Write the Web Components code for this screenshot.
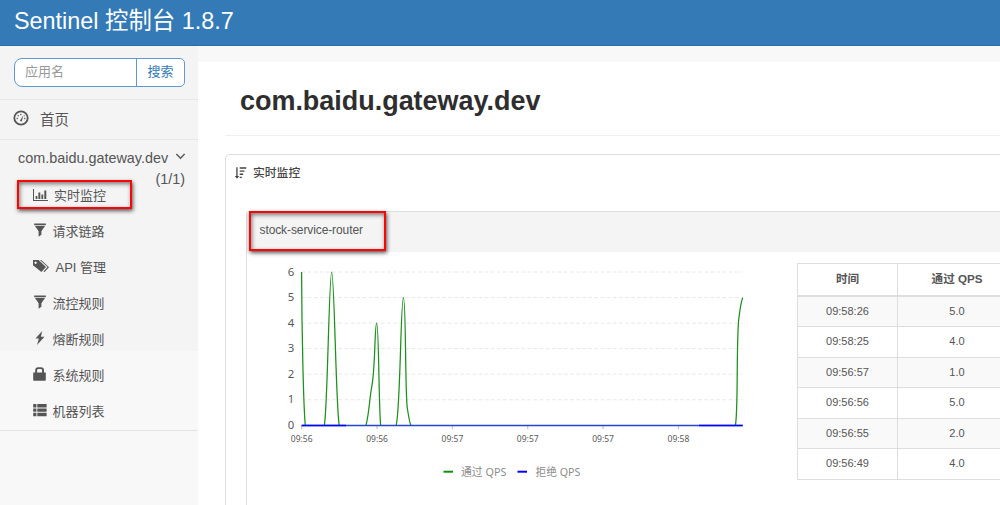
<!DOCTYPE html>
<html lang="zh">
<head>
<meta charset="utf-8">
<title>Sentinel 控制台</title>
<style>
html,body{margin:0;height:100%;overflow:hidden;background:#fff}
body{font-family:"Liberation Sans","Noto Sans CJK SC",sans-serif;color:#555}
</style>
</head>
<body>
<sentinel-app></sentinel-app>
<script>
const define = (name, html) => customElements.define(name, class extends HTMLElement {
  connectedCallback() {
    if (this.shadowRoot) return;
    const root = this.attachShadow({mode: 'open'});
    const t = document.createElement('template');
    t.innerHTML = typeof html === 'function' ? html(this) : html;
    root.append(t.content.cloneNode(true));
  }
});

const ICONS = {
  dash: '<circle cx="8" cy="8" r="6.7" fill="none" stroke="currentColor" stroke-width="1.8"/><path d="M7.1 10.6 10.2 5.4 9 10.8a1 1 0 0 1-1.9-.2z"/><circle cx="4.2" cy="8.4" r=".75"/><circle cx="5.2" cy="5.7" r=".75"/><circle cx="7.8" cy="4.4" r=".75"/><circle cx="11.8" cy="8.4" r=".75"/><circle cx="11.2" cy="5.8" r=".6"/>',
  chart: '<path d="M1 3h1v11h14v1H1zM3.6 10h1.8v3H3.6zM6.4 6.5h1.9V13H6.4zM9.4 8.5h1.8V13H9.4zM12.3 4.5h2V13h-2z"/>',
  filter: '<path d="M2.2 1.5h11.6v1.7H2.2zM3 4h10L9.4 9.2v3.6L6.6 14.8V9.2z"/>',
  tags: '<path fill-rule="evenodd" d="M1 2h5.6L14 9l-4.6 5L1 7.2zM3.6 3.5a1.2 1.2 0 1 0 .01 0z"/><path d="M8 2h1.3L17 9.2l-4.7 5-.8-.7L15.5 9z"/>',
  flash: '<path d="M10.2 1 3.5 8.4h3.4L5 15l7.5-8.3H8.9z"/>',
  lock: '<path fill-rule="evenodd" d="M1.2 6.5h2V4.2a3 3 0 0 1 3-3h2.8a3 3 0 0 1 3 3v2.3h1.8V14a.8.8 0 0 1-.8.8H2a.8.8 0 0 1-.8-.8zM5.1 6.5h5V4.4a1.3 1.3 0 0 0-1.3-1.3H6.4a1.3 1.3 0 0 0-1.3 1.3z"/>',
  list: '<path d="M1.2 2h3.2v3.4H1.2zM1.2 6.4h3.2v3.4H1.2zM1.2 10.8h3.2v3.4H1.2zM5.3 2h9.3v3.4H5.3zM5.3 6.4h9.3v3.4H5.3zM5.3 10.8h9.3v3.4H5.3z"/>',
  sort: '<path d="M2.6 1.5h1.5v10h1.8l-2.5 3.2L.9 11.5h1.7zM6.5 1.5h7.5v1.6H6.5zM6.5 5H12v1.6H6.5zM6.5 8.6h4v1.6h-4zM6.5 12.2h2.4v1.6H6.5z"/>',
  down: '<path d="M2 4.5 8 10.5l6-6" fill="none" stroke="currentColor" stroke-width="2"/>'
};

define('ui-icon', el => `<style>
:host{display:block;flex:none;width:16px;height:16px}
svg{display:block;width:100%;height:100%;fill:currentColor;overflow:visible}
</style><svg viewBox="0 0 16 16">${ICONS[el.getAttribute('name')]}</svg>`);

define('top-bar', `<style>
:host{display:flex;box-sizing:border-box;height:46px;background:#337ab7;border-bottom:1px solid #2a6ba8;color:#fff;
font-size:23.4px;line-height:42px;padding-left:14px;white-space:pre}
</style><slot></slot>`);

define('search-box', `<style>
:host{display:flex;box-sizing:border-box;width:171px;height:29px;margin:12px 0 0 14px;border:1px solid #5e9ace;border-radius:8px 5px 5px 8px;background:#fff;font-size:13px;line-height:26px}
.field{flex:1;padding-left:10px;color:#999}
.btn{width:47px;text-align:center;border-left:1px solid #5e9ace;color:#337ab7}
</style><div class="field">应用名</div><div class="btn">搜索</div>`);

define('nav-item', el => `<style>
:host{display:flex;align-items:center;height:36px;padding-left:32px;font-size:13px;white-space:pre}
ui-icon{margin-right:${el.getAttribute('gap') || 4.5}px}
</style><ui-icon name="${el.getAttribute('icon')}"></ui-icon><slot></slot>`);

define('side-nav', `<style>
:host{display:flex;flex-direction:column;width:198px;height:459px;flex:none;color:#555;
background:linear-gradient(#f4f4f4 305px,#f8f8f8 305px)}
.search{height:53px;border-bottom:1px solid #e7e7e7}
.home{height:39px;border-bottom:1px solid #e7e7e7;display:flex;align-items:center;padding-left:13px;gap:11px;font-size:14.5px}
.home ui-icon{margin-bottom:3px}
.home span{padding-bottom:2px}
.group{height:36px;display:grid;grid-template-columns:150px 12px;column-gap:7px;padding-left:18px;font-size:14.4px;white-space:nowrap;line-height:21px;padding-top:8px;box-sizing:border-box}
.group ui-icon{width:11px;height:11px;margin-top:3px}
.count{grid-column:1/3;text-align:right;width:167px}
.items{border-bottom:1px solid #e4e4e4;height:254px}
</style>
<div class="search"><search-box></search-box></div>
<div class="home"><ui-icon name="dash"></ui-icon><span>首页</span></div>
<div class="group"><span>com.baidu.gateway.dev</span><ui-icon name="down"></ui-icon><span class="count">(1/1)</span></div>
<div class="items">
<nav-item icon="chart" gap="6">实时监控</nav-item>
<nav-item icon="filter">请求链路</nav-item>
<nav-item icon="tags" gap="7.5">API 管理</nav-item>
<nav-item icon="filter">流控规则</nav-item>
<nav-item icon="flash">熔断规则</nav-item>
<nav-item icon="lock">系统规则</nav-item>
<nav-item icon="list">机器列表</nav-item>
</div>`);

define('qps-chart', () => {
  const y = v => 173.3 - v * 25.55;
  let g = '';
  for (let v = 0; v <= 6; v++) {
    if (v) g += `<path d="M54.7 ${y(v)}H495.5" stroke="#e8e8e8" stroke-dasharray="3.7 2.4"/>`;
    g += `<text x="47.3" y="${y(v) + 3.6}" text-anchor="end" font-size="11.4">${v}</text>`;
  }
  ['09:56','09:56','09:57','09:57','09:57','09:58'].forEach((t, i) => {
    const x = 54.7 + i * 75.35;
    g += `<path d="M${x} 173v4" stroke="#bbb"/><text x="${x}" y="190" text-anchor="middle" font-size="9.8" textLength="21.8" lengthAdjust="spacingAndGlyphs">${t}</text>`;
  });
  return `<style>
:host{display:block;width:530px;height:240px}
svg{display:block}text{fill:#595959;font-family:"Noto Sans","Noto Sans CJK SC",sans-serif}.lg{fill:#8c8c8c;font-size:11px}
</style><svg width="530" height="240" viewBox="0 0 530 240">${g}
<path fill="none" stroke="#1b901b" stroke-width="1.25" d="M54.6 20C54.8 80 56.5 155 58.3 173.3M77.3 173.3C80.5 160 82 20 84.7 20S89 160 92.3 173.3M119 173.3C122 162 122.8 145 124.5 136C128.5 118 127.5 71 129.7 71S131.8 160 133.7 173.3M149.2 173.3C153.5 155 153.7 45.6 156.4 45.6S158 140 160.3 156C161.8 166 162.8 172 164 173.3M488.4 173.3C491.5 157 489 80 492.2 64Q493.5 52 495.7 45.6"/>
<path d="M54.7 173.5H495.7" stroke="#2447d0" stroke-width="1.4"/><path d="M54.7 173.5H99M452 173.5h43.7" stroke="#00f" stroke-width="1.5"/>
<path d="M196.5 219.7h9.5" stroke="#109010" stroke-width="2"/><text class="lg" x="214" y="223.5" textLength="45.5" lengthAdjust="spacingAndGlyphs">通过 QPS</text>
<path d="M270.5 219.7h9.5" stroke="#00f" stroke-width="2"/><text class="lg" x="288.5" y="223.5" textLength="45" lengthAdjust="spacingAndGlyphs">拒绝 QPS</text>
</svg>`;
});

define('qps-table', () => {
  const rows = [['09:58:26','5.0'],['09:58:25','4.0'],['09:56:57','1.0'],['09:56:56','5.0'],['09:56:55','2.0'],['09:56:49','4.0']];
  return `<style>
:host{display:block;margin-top:11px;flex:none}
table{border-collapse:collapse;table-layout:fixed;width:219px;font-size:11px;text-align:center;color:#555}
th,td{border:1px solid #ddd;padding:0;height:29.5px}
th{height:30.5px;border-bottom:2px solid #ddd;font-size:11.6px;line-height:30px}
td{line-height:29px}
tbody tr:nth-child(odd){background:#f9f9f9}
</style><table><colgroup><col style="width:100px"><col style="width:119px"></colgroup><thead><tr><th>时间</th><th>通过 QPS</th></tr></thead><tbody>${rows.map(r => `<tr><td>${r[0]}</td><td>${r[1]}</td></tr>`).join('')}</tbody></table>`;
});

define('mark-box', `<style>
:host{display:block;position:absolute;box-sizing:border-box;border:2px solid #fb0505;box-shadow:1px 2px 4px rgba(0,0,0,.65),inset 1px 2px 4px rgba(0,0,0,.5);pointer-events:none}
</style>`);

define('resource-panel', `<style>
:host{display:block;width:790px;height:320px;border:1px solid #ddd;border-radius:3px 0 0 0;box-sizing:border-box}
.head{height:40px;background:#f4f4f4;font-size:12px;letter-spacing:-.1px;line-height:37px;padding-left:12.5px}
.body{display:flex;gap:20px}
</style><div class="head"><slot></slot></div><div class="body"><qps-chart></qps-chart><qps-table></qps-table></div>`);

define('monitor-card', `<style>
:host{display:block;box-sizing:border-box;width:830px;height:400px;margin:18px 0 0 27px;border:1px solid #ddd;border-radius:5px;padding-left:20px}
.title{display:flex;align-items:center;height:36px;margin:0 0 20px -12px;gap:5px;font-size:11.8px;font-weight:500;color:#444}
.title span{padding-bottom:3px}
ui-icon{width:14px;height:14px}
</style><div class="title"><ui-icon name="sort"></ui-icon><span>实时监控</span></div><resource-panel>stock-service-router</resource-panel>`);

define('page-main', `<style>
:host{display:block;flex:1;min-width:0;overflow:hidden;background:#fff;border-top:16px solid #f8f8f8;height:443px}
h1{margin:0 0 0 27px;padding-left:15px;height:73px;border-bottom:1px solid #eee;font-size:26.95px;line-height:78px;color:#2e2e2e;font-weight:bold}
</style><h1>com.baidu.gateway.dev</h1><monitor-card></monitor-card>`);

define('sentinel-app', `<style>
:host{display:block;position:relative;width:1000px;height:505px;overflow:hidden}
.body{display:flex}
.m1{left:17px;top:180px;width:115px;height:29px}
.m2{left:249px;top:211px;width:137px;height:40px}
</style><top-bar>Sentinel 控制台 1.8.7</top-bar><div class="body"><side-nav></side-nav><page-main></page-main></div>
<mark-box class="m1"></mark-box><mark-box class="m2"></mark-box>`);
</script>
</body>
</html>
